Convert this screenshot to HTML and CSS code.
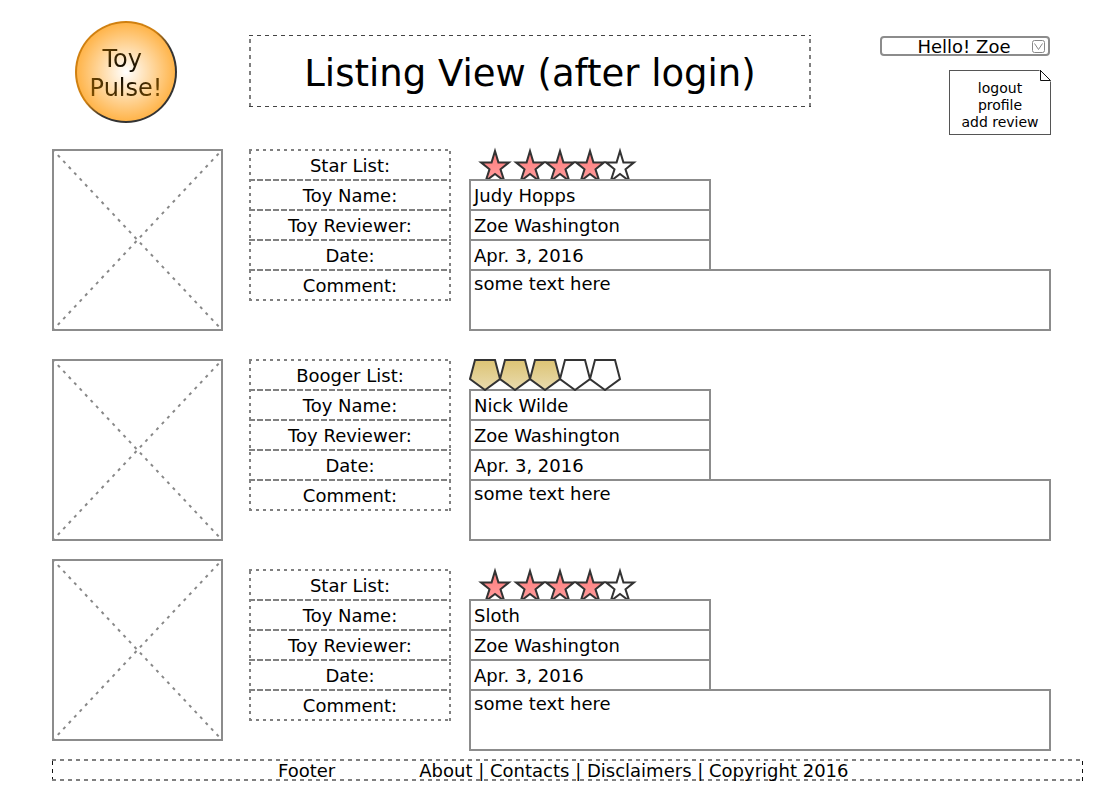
FILE: index.html
```html
<!DOCTYPE html>
<html lang="en">
<head>
<meta charset="utf-8">
<title>Toy Pulse!</title>
<link rel="stylesheet" href="styles.css">
</head>
<body>
<svg class="defs" width="0" height="0" aria-hidden="true">
  <defs>
    <linearGradient id="pink" x1="0" y1="0" x2="0" y2="1"><stop offset="0" stop-color="#ff7878"/><stop offset="1" stop-color="#ffa0a0"/></linearGradient>
    <linearGradient id="gold" x1="0" y1="0" x2="0" y2="1"><stop offset="0" stop-color="#dcc374"/><stop offset="1" stop-color="#eadcaf"/></linearGradient>
    <path id="star" d="M15 1 L18.4 12.4 H29 L20.5 19.3 L24.3 31 L15 24 L5.7 31 L9.5 19.3 L1 12.4 H11.6 Z"/>
    <path id="booger" d="M6 1 H26 L31 20 L16 31 L1 20 Z"/>
    <symbol id="stars" viewBox="0 -4 170 33">
      <g fill="url(#pink)" stroke="#333" stroke-width="2"><use href="#star" x="11"/><use href="#star" x="46"/><use href="#star" x="76"/><use href="#star" x="106"/><use href="#star" x="136" fill="#fff"/></g>
    </symbol>
    <symbol id="boogers" viewBox="0 0 170 32">
      <g fill="url(#gold)" stroke="#333" stroke-width="2"><use href="#booger"/><use href="#booger" x="30"/><use href="#booger" x="60"/><use href="#booger" x="90" fill="#fff"/><use href="#booger" x="120" fill="#fff"/></g>
    </symbol>
    <symbol id="photo" viewBox="0 0 171 182">
      <path d="M1 1 L170 181 M1 181 L170 1" fill="none" stroke="#888" stroke-width="2" stroke-dasharray="3 5" stroke-dashoffset="1"/>
      <rect x="1" y="1" width="169" height="180" fill="none" stroke="#8c8c8c" stroke-width="2"/>
    </symbol>
  </defs>
</svg>
<div class="page">
  <header class="header">
    <a class="logo" href="#"><span class="logo-text">Toy&nbsp;<br>Pulse!</span></a>
    <h1 class="title">Listing View (after login)</h1>
    <div class="account">
      <button class="account-button" type="button">
        <span>Hello! Zoe</span>
        <svg class="chevron" viewBox="0 0 13 13" aria-hidden="true"><rect x=".5" y=".5" width="12" height="12" rx="2"/><path d="M2.5 3.5 L6.5 9.5 L10.5 3.5"/></svg>
      </button>
      <nav class="menu">
        <svg class="fold" viewBox="0 0 12 12" aria-hidden="true"><path class="fold-cut" d="M0 0 H12 V12 Z"/><path d="M1.5 0 V10.5 H11.5 L1 0"/></svg>
        <a href="#">logout</a><a href="#">profile</a><a href="#">add review</a>
      </nav>
    </div>
  </header>
  <main class="reviews">
    <article class="review">
      <svg class="photo" role="img" aria-label="Toy photo"><use href="#photo"/></svg>
      <div class="labels"><span>Star List:</span><span>Toy Name:</span><span>Toy Reviewer:</span><span>Date:</span><span>Comment:</span></div>
      <div class="values">
        <svg class="rating rating-stars" role="img" aria-label="4 of 5 stars"><use href="#stars"/></svg>
        <div class="value">Judy Hopps</div><div class="value">Zoe Washington</div><div class="value">Apr. 3, 2016</div>
        <div class="comment">some text here</div>
      </div>
    </article>
    <article class="review">
      <svg class="photo" role="img" aria-label="Toy photo"><use href="#photo"/></svg>
      <div class="labels"><span>Booger List:</span><span>Toy Name:</span><span>Toy Reviewer:</span><span>Date:</span><span>Comment:</span></div>
      <div class="values">
        <svg class="rating rating-boogers" role="img" aria-label="3 of 5 boogers"><use href="#boogers"/></svg>
        <div class="value">Nick Wilde</div><div class="value">Zoe Washington</div><div class="value">Apr. 3, 2016</div>
        <div class="comment">some text here</div>
      </div>
    </article>
    <article class="review review-last">
      <svg class="photo" role="img" aria-label="Toy photo"><use href="#photo"/></svg>
      <div class="labels"><span>Star List:</span><span>Toy Name:</span><span>Toy Reviewer:</span><span>Date:</span><span>Comment:</span></div>
      <div class="values">
        <svg class="rating rating-stars" role="img" aria-label="4 of 5 stars"><use href="#stars"/></svg>
        <div class="value">Sloth</div><div class="value">Zoe Washington</div><div class="value">Apr. 3, 2016</div>
        <div class="comment">some text here</div>
      </div>
    </article>
  </main>
  <footer class="footer">
    <span>Footer</span>
    <nav><a href="#">About</a> | <a href="#">Contacts</a> | <a href="#">Disclaimers</a> | Copyright 2016</nav>
  </footer>
</div>
</body>
</html>
```

FILE: styles.css
```css
* { box-sizing: border-box; }
body { margin: 0; background: #fff; color: #000; font: 18px/20px "DejaVu Sans", Verdana, sans-serif; }
a { color: inherit; text-decoration: none; }
.defs { position: absolute; }
.page { padding: 21px 19px 0 52px; }

.header { display: grid; grid-template-columns: 174px 562px 1fr; padding: 0 32px 0 23px; height: 128px; align-items: start; }
.logo { width: 102px; height: 102px; border-radius: 50%; border: 2px solid transparent; display: grid; place-content: center; text-align: center; font-size: 24px; line-height: 29px;
  background: radial-gradient(circle, #fff, #ffb347 72%) padding-box, linear-gradient(135deg, #d08010 45%, #333 60%) border-box; }
.logo-text { padding-top: 4px; color: transparent; background: radial-gradient(circle, #000, #805000 90%); background-clip: text; }

/* Dashed frames: one repeating strip for each side (top, bottom, left, right). */
.title, .labels, .footer {
  background:
    repeating-linear-gradient(90deg, var(--dash-x) 0 var(--on), transparent 0 var(--period)) top / 100% var(--thick-x) no-repeat,
    repeating-linear-gradient(90deg, var(--dash-x) 0 var(--on), transparent 0 var(--period)) bottom / 100% var(--thick-x) no-repeat,
    repeating-linear-gradient(0deg, var(--dash-y) 0 var(--on), transparent 0 var(--period)) left / var(--thick-y) 100% no-repeat,
    repeating-linear-gradient(0deg, var(--dash-y) 0 var(--on), transparent 0 var(--period)) right / var(--thick-y) 100% no-repeat;
}
.title { --dash-x: #444; --dash-y: #808080; --on: 4px; --period: 8px; --thick-x: 1px; --thick-y: 2px;
  margin: 14px 0 0; height: 72px; font-size: 37px; font-weight: normal; line-height: 78px; text-align: center; white-space: nowrap; }
.account { display: flex; flex-direction: column; align-items: flex-end; gap: 14px; padding-top: 15px; }
.account-button { width: 170px; height: 20px; margin-right: 1px; padding: 0 3px 0 14px; border: 2px solid #8c8c8c; border-radius: 4px; background: #fff; color: #000; display: flex; align-items: center; font: inherit; line-height: 16px; }
.account-button span { flex: 1; padding-top: 1px; }
.chevron { width: 13px; height: 13px; fill: none; stroke: #888; }
.menu { position: relative; width: 102px; height: 65px; padding-top: 9px; border: 1px solid #555; display: flex; flex-direction: column; align-items: center; font-size: 14px; line-height: 17px; }
.fold { position: absolute; top: -1px; right: -1px; width: 12px; height: 12px; fill: none; stroke: #111; }
.fold .fold-cut { fill: #fff; stroke: none; }

.reviews { display: flex; flex-direction: column; gap: 28px; }
.review { display: grid; grid-template-columns: 171px 228px 1fr; padding-right: 32px; align-items: start; }
.photo { width: 171px; height: 182px; }
.labels { --dash-x: #808080; --dash-y: #808080; --on: 3px; --period: 7px; --thick-x: 2px; --thick-y: 2px;
  margin-left: 26px; width: 202px; display: flex; flex-direction: column; padding: 2px 0; }
.labels span { height: 30px; line-height: 30px; text-align: center;
  background: repeating-linear-gradient(90deg, #808080 0 6px, transparent 0 8px) bottom / 100% 2px no-repeat; }
.labels span:last-child { background: none; height: 28px; }
.values { margin-left: 18px; }
.rating { display: block; width: 170px; }
.rating-stars { height: 33px; margin-top: -3px; }
.rating-boogers { height: 32px; margin-bottom: -2px; position: relative; }
.value { width: 242px; height: 30px; border: 2px solid #8c8c8c; border-bottom: 0; padding-left: 3px; line-height: 30px; }
.comment { height: 62px; border: 2px solid #8c8c8c; padding: 3px; }
.review-last .photo { margin-top: -10px; }
.footer { --dash-x: #808080; --dash-y: #111; --on: 4px; --period: 8px; --thick-x: 2px; --thick-y: 1px;
  margin-top: 8px; height: 22px; display: flex; gap: 84px; padding-left: 226px; line-height: 24px; white-space: nowrap; }
```
